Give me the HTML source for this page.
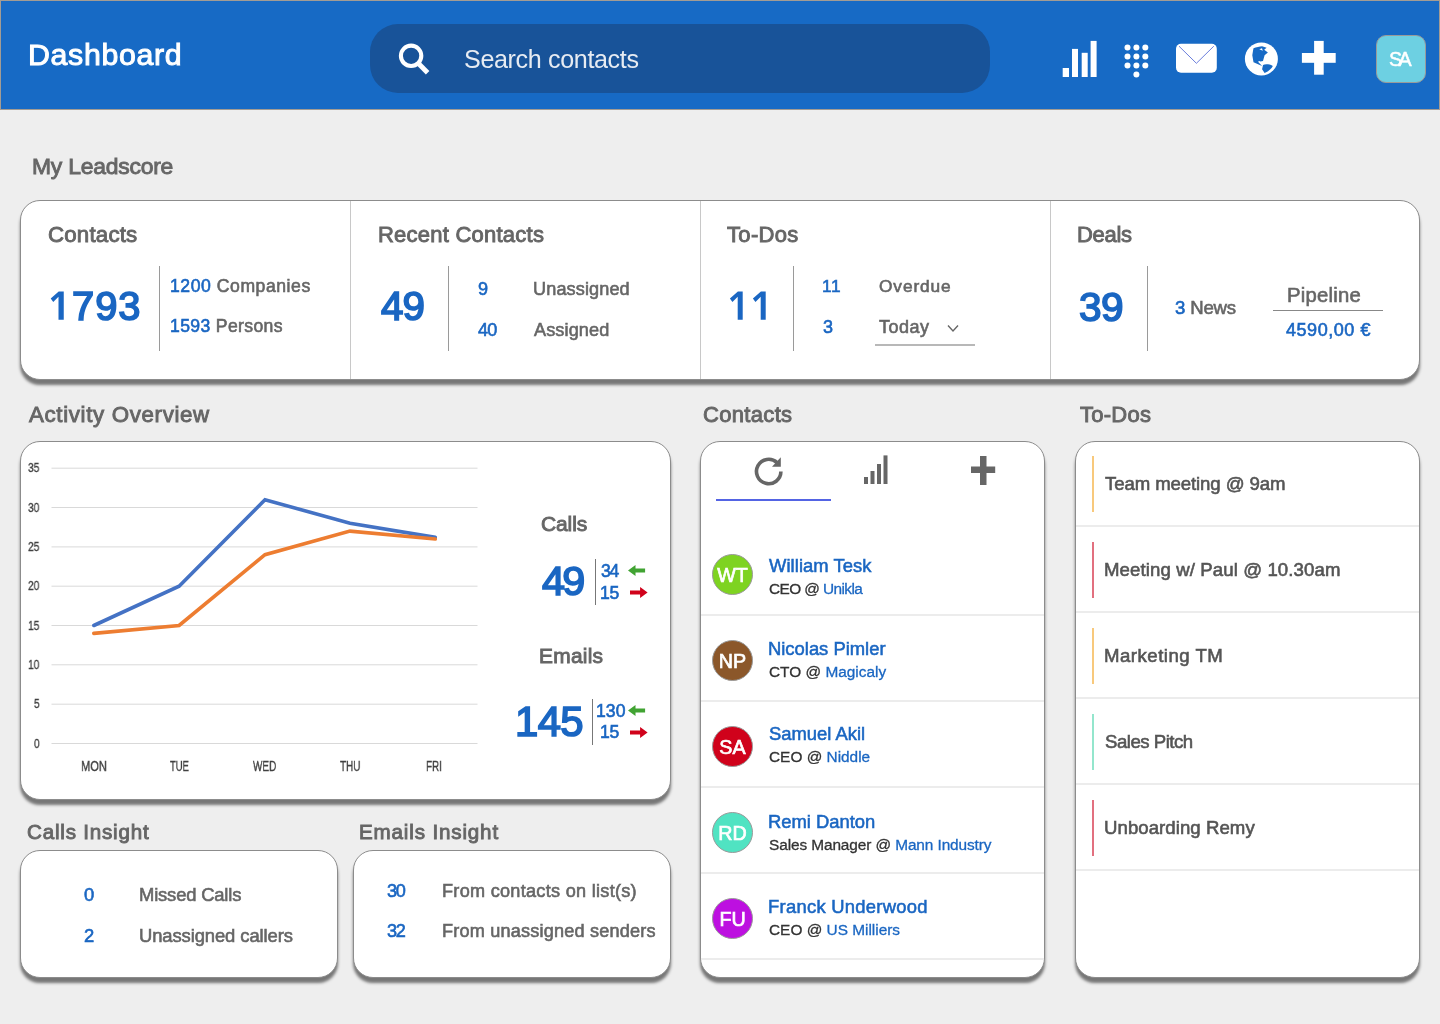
<!DOCTYPE html>
<html><head><meta charset="utf-8">
<style>
*{margin:0;padding:0;box-sizing:border-box}
html,body{width:1440px;height:1024px;overflow:hidden;background:#eeeeee;font-family:"Liberation Sans",sans-serif;position:relative}
.a{position:absolute;white-space:nowrap;line-height:1;will-change:transform}
.hdr{position:absolute;left:0;top:0;width:1440px;height:110px;background:#176ac5;border:1px solid #a39c94}
.search{position:absolute;left:370px;top:24px;width:620px;height:69px;border-radius:28px;background:#185399}
.card{position:absolute;background:#fff;border:1px solid #8c8c8c;border-radius:20px;box-shadow:0 5px 3px rgba(0,0,0,.5)}
.vd{position:absolute;width:1px;background:#9a9a9a}
.hd{position:absolute;height:2px;background:#ececec}
.av{position:absolute;width:41px;height:41px;border-radius:50%;border:1px solid #9a9a9a}
.bar{position:absolute;width:2px;height:56px}
</style></head><body>
<div class="hdr"></div>
<div class="a" style="left:27.70px;top:40.44px;font-size:30.3px;color:#fff;letter-spacing:0.667px;-webkit-text-stroke-width:1.0px">Dashboard</div>
<div class="search"></div>
<svg class="a" style="left:396px;top:40px" width="38" height="38" viewBox="0 0 38 38"><circle cx="15.1" cy="15.8" r="10.2" fill="none" stroke="#fff" stroke-width="4.1"/><line x1="21.5" y1="22.5" x2="31.6" y2="32.8" stroke="#fff" stroke-width="4.9"/></svg>
<div class="a" style="left:463.60px;top:46.55px;font-size:25.1px;color:#e6ebf2;letter-spacing:-0.356px">Search contacts</div>
<svg class="a" style="left:1060px;top:38px" width="40" height="42">
<rect x="2.7" y="30" width="6.3" height="9" fill="#fff"/>
<rect x="12" y="10.9" width="6" height="28.1" fill="#fff"/>
<rect x="21.7" y="14.8" width="6" height="24.2" fill="#fff"/>
<rect x="30.6" y="2.9" width="6" height="36.1" fill="#fff"/>
</svg>
<svg class="a" style="left:1115px;top:38px" width="40" height="42"><circle cx="12.5" cy="9.4" r="3" fill="#fff"/><circle cx="21.4" cy="9.4" r="3" fill="#fff"/><circle cx="30.3" cy="9.4" r="3" fill="#fff"/><circle cx="12.5" cy="18.6" r="3" fill="#fff"/><circle cx="21.4" cy="18.6" r="3" fill="#fff"/><circle cx="30.3" cy="18.6" r="3" fill="#fff"/><circle cx="12.5" cy="27.5" r="3" fill="#fff"/><circle cx="21.4" cy="27.5" r="3" fill="#fff"/><circle cx="30.3" cy="27.5" r="3" fill="#fff"/><circle cx="21.4" cy="36.4" r="3" fill="#fff"/></svg>
<svg class="a" style="left:1170px;top:38px" width="54" height="42">
<rect x="6" y="5.8" width="40.8" height="29" rx="5" fill="#fff"/>
<path d="M9 8.2 L26.4 25.3 L43.8 8.2" fill="none" stroke="#5a6fd8" stroke-width="0.9"/>
</svg>
<svg class="a" style="left:1240px;top:38px" width="44" height="42">
<circle cx="21.4" cy="20.9" r="16.5" fill="#fff"/>
<path d="M13.5 10.3 C16 9 20 8.5 22.1 8.2 L26.6 9.8 L24.2 11.7 L27.9 14.4 L24.6 17.2 L23 23 L20.5 23.4 L19.3 23 L18 23.8 L22.1 27.9 L13.5 24.2 L12.3 17.2 L13.1 12.3 Z" fill="#176ac5"/>
<path d="M19.3 11.3 L22 10.2 L22.8 12.7 Z" fill="#fff"/>
<path d="M23 27 C25 26 29 26 32.8 27.9 C32 30 29 33 24.6 34.9 L22.1 31.2 Z" fill="#176ac5"/>
</svg>
<svg class="a" style="left:1298px;top:38px" width="42" height="42">
<rect x="3.9" y="15" width="33.8" height="9.8" fill="#fff"/>
<rect x="16.1" y="2.9" width="9.6" height="33.8" fill="#fff"/>
</svg>
<div class="a" style="left:1376px;top:35px;width:50px;height:48px;border-radius:10px;background:#6dd0e2;border:1px solid #9a9a9a"></div>
<div class="a" style="left:1389.25px;top:50.12px;font-size:19.7px;color:#fff;letter-spacing:-3.531px;-webkit-text-stroke-width:0.5px">SA</div>
<div class="a" style="left:31.70px;top:155.41px;font-size:22.9px;color:#666666;letter-spacing:-0.222px;-webkit-text-stroke-width:0.9px">My Leadscore</div>
<div class="card" style="left:20px;top:200px;width:1400px;height:180px"></div>
<div class="vd" style="left:350px;top:201px;height:178px;background:#c8c8c8"></div>
<div class="vd" style="left:700px;top:201px;height:178px;background:#c8c8c8"></div>
<div class="vd" style="left:1050px;top:201px;height:178px;background:#c8c8c8"></div>
<div class="a" style="left:48.20px;top:223.82px;font-size:22.3px;color:#666666;letter-spacing:0.180px;-webkit-text-stroke-width:0.9px">Contacts</div>
<svg class="a" style="left:0;top:0;overflow:visible" width="1" height="1"><path d="M58.70 291.60 L63.75 291.60 L63.75 319.70 L58.50 319.70 L58.50 296.80 L53.25 301.90 L50.70 298.50 Z" fill="#1a66c2"/></svg>
<div class="a" style="left:71.65px;top:286.92px;font-size:39.9px;color:#1a66c2;letter-spacing:0.965px;-webkit-text-stroke-width:1.7px">793</div>
<div class="vd" style="left:159px;top:266px;height:85px"></div>
<div class="a" style="left:170.00px;top:277.60px;font-size:17.6px;color:#666666;letter-spacing:0.552px;-webkit-text-stroke-width:0.6px"><span style="color:#1a66c2">1200</span> Companies</div>
<div class="a" style="left:170.00px;top:318.20px;font-size:17.6px;color:#666666;letter-spacing:0.357px;-webkit-text-stroke-width:0.6px"><span style="color:#1a66c2">1593</span> Persons</div>
<div class="a" style="left:377.65px;top:223.97px;font-size:22.0px;color:#666666;letter-spacing:0.233px;-webkit-text-stroke-width:0.9px">Recent Contacts</div>
<div class="a" style="left:380.95px;top:286.68px;font-size:40.3px;color:#1a66c2;letter-spacing:-0.811px;-webkit-text-stroke-width:1.7px">49</div>
<div class="vd" style="left:448px;top:266px;height:85px"></div>
<div class="a" style="left:477.80px;top:280.17px;font-size:18.1px;color:#1a66c2;-webkit-text-stroke-width:0.6px">9</div>
<div class="a" style="left:533.30px;top:280.17px;font-size:18.1px;color:#666666;letter-spacing:0.123px;-webkit-text-stroke-width:0.6px">Unassigned</div>
<div class="a" style="left:477.80px;top:321.07px;font-size:18.1px;color:#1a66c2;letter-spacing:-0.763px;-webkit-text-stroke-width:0.6px">40</div>
<div class="a" style="left:534.30px;top:321.07px;font-size:18.1px;color:#666666;letter-spacing:0.118px;-webkit-text-stroke-width:0.6px">Assigned</div>
<div class="a" style="left:727.45px;top:223.97px;font-size:22.0px;color:#666666;letter-spacing:0.323px;-webkit-text-stroke-width:0.9px">To-Dos</div>
<svg class="a" style="left:0;top:0;overflow:visible" width="1" height="1"><path d="M737.90 291.60 L742.70 291.60 L742.70 319.80 L737.70 319.80 L737.70 296.80 L732.45 301.90 L729.90 298.50 Z" fill="#1a66c2"/></svg>
<svg class="a" style="left:0;top:0;overflow:visible" width="1" height="1"><path d="M760.90 291.60 L765.70 291.60 L765.70 319.80 L760.70 319.80 L760.70 296.80 L755.45 301.90 L752.90 298.50 Z" fill="#1a66c2"/></svg>
<div class="vd" style="left:793px;top:266px;height:85px"></div>
<div class="a" style="left:822.20px;top:277.95px;font-size:17.3px;color:#1a66c2;letter-spacing:0.572px;-webkit-text-stroke-width:0.6px">11</div>
<div class="a" style="left:879.30px;top:277.95px;font-size:17.3px;color:#666666;letter-spacing:0.905px;-webkit-text-stroke-width:0.6px">Overdue</div>
<div class="a" style="left:823.20px;top:318.16px;font-size:18.0px;color:#1a66c2;-webkit-text-stroke-width:0.6px">3</div>
<div class="a" style="left:878.60px;top:318.16px;font-size:18.0px;color:#666666;letter-spacing:0.492px;-webkit-text-stroke-width:0.6px">Today</div>
<svg class="a" style="left:945px;top:322px" width="16" height="12"><path d="M3 3.6 L8 9 L13 3.6" fill="none" stroke="#666" stroke-width="1.4"/></svg>
<div class="a" style="left:875.4px;top:343.5px;width:100px;height:1.6px;background:#b8b8b8"></div>
<div class="a" style="left:1077.45px;top:224.37px;font-size:22.0px;color:#666666;letter-spacing:-0.287px;-webkit-text-stroke-width:0.9px">Deals</div>
<div class="a" style="left:1078.55px;top:286.52px;font-size:40.6px;color:#1a66c2;letter-spacing:-0.568px;-webkit-text-stroke-width:1.7px">39</div>
<div class="vd" style="left:1147px;top:266px;height:85px"></div>
<div class="a" style="left:1175.10px;top:299.25px;font-size:18.6px;color:#666666;letter-spacing:-0.181px;-webkit-text-stroke-width:0.6px"><span style="color:#1a66c2">3</span> News</div>
<div class="a" style="left:1287.00px;top:284.81px;font-size:20.3px;color:#666666;letter-spacing:0.245px;-webkit-text-stroke-width:0.6px">Pipeline</div>
<div class="a" style="left:1273px;top:310px;width:110px;height:1px;background:#888"></div>
<div class="a" style="left:1285.60px;top:320.56px;font-size:18.0px;color:#1a66c2;letter-spacing:0.542px;-webkit-text-stroke-width:0.6px">4590,00 €</div>
<div class="a" style="left:28.55px;top:404.22px;font-size:22.3px;color:#666666;letter-spacing:0.654px;-webkit-text-stroke-width:0.9px">Activity Overview</div>
<div class="card" style="left:20px;top:441px;width:651px;height:359px"></div>
<svg class="a" style="left:0;top:0" width="700" height="800"><line x1="51.5" y1="743.5" x2="477.5" y2="743.5" stroke="#d9d9d9" stroke-width="1"/><line x1="51.5" y1="704.2" x2="477.5" y2="704.2" stroke="#d9d9d9" stroke-width="1"/><line x1="51.5" y1="664.8" x2="477.5" y2="664.8" stroke="#d9d9d9" stroke-width="1"/><line x1="51.5" y1="625.5" x2="477.5" y2="625.5" stroke="#d9d9d9" stroke-width="1"/><line x1="51.5" y1="586.2" x2="477.5" y2="586.2" stroke="#d9d9d9" stroke-width="1"/><line x1="51.5" y1="546.9" x2="477.5" y2="546.9" stroke="#d9d9d9" stroke-width="1"/><line x1="51.5" y1="507.5" x2="477.5" y2="507.5" stroke="#d9d9d9" stroke-width="1"/><line x1="51.5" y1="468.2" x2="477.5" y2="468.2" stroke="#d9d9d9" stroke-width="1"/></svg>
<div class="a" style="left:33.84px;top:737.63px;font-size:12.6px;color:#404040;-webkit-text-stroke-width:0.35px;transform:scaleX(0.7891);transform-origin:0 0">0</div>
<div class="a" style="left:33.84px;top:698.30px;font-size:12.6px;color:#404040;-webkit-text-stroke-width:0.35px;transform:scaleX(0.7891);transform-origin:0 0">5</div>
<div class="a" style="left:28.04px;top:658.97px;font-size:12.6px;color:#404040;-webkit-text-stroke-width:0.35px;transform:scaleX(0.8081);transform-origin:0 0">10</div>
<div class="a" style="left:28.04px;top:619.64px;font-size:12.6px;color:#404040;-webkit-text-stroke-width:0.35px;transform:scaleX(0.8081);transform-origin:0 0">15</div>
<div class="a" style="left:28.04px;top:580.31px;font-size:12.6px;color:#404040;-webkit-text-stroke-width:0.35px;transform:scaleX(0.8081);transform-origin:0 0">20</div>
<div class="a" style="left:28.04px;top:540.98px;font-size:12.6px;color:#404040;-webkit-text-stroke-width:0.35px;transform:scaleX(0.8081);transform-origin:0 0">25</div>
<div class="a" style="left:28.04px;top:501.65px;font-size:12.6px;color:#404040;-webkit-text-stroke-width:0.35px;transform:scaleX(0.8081);transform-origin:0 0">30</div>
<div class="a" style="left:28.04px;top:462.32px;font-size:12.6px;color:#404040;-webkit-text-stroke-width:0.35px;transform:scaleX(0.8081);transform-origin:0 0">35</div>
<div class="a" style="left:80.90px;top:757.53px;font-size:15.2px;color:#404040;-webkit-text-stroke-width:0.35px;transform:scaleX(0.7275);transform-origin:0 0">MON</div>
<div class="a" style="left:169.51px;top:757.53px;font-size:15.2px;color:#404040;-webkit-text-stroke-width:0.35px;transform:scaleX(0.6210);transform-origin:0 0">TUE</div>
<div class="a" style="left:252.61px;top:757.53px;font-size:15.2px;color:#404040;-webkit-text-stroke-width:0.35px;transform:scaleX(0.6562);transform-origin:0 0">WED</div>
<div class="a" style="left:339.51px;top:757.53px;font-size:15.2px;color:#404040;-webkit-text-stroke-width:0.35px;transform:scaleX(0.6537);transform-origin:0 0">THU</div>
<div class="a" style="left:426.36px;top:757.53px;font-size:15.2px;color:#404040;-webkit-text-stroke-width:0.35px;transform:scaleX(0.6506);transform-origin:0 0">FRI</div>
<svg class="a" style="left:0;top:0" width="700" height="800"><polyline points="93.8,625.5 179.1,586.2 265,499.7 350,523.3 435.3,537.4" fill="none" stroke="#4472c4" stroke-width="3.6" stroke-linejoin="miter" stroke-linecap="round"/><polyline points="93.8,633.4 179.1,625.5 265,554.7 350,531.1 435.3,539.0" fill="none" stroke="#ed7d31" stroke-width="3.6" stroke-linejoin="miter" stroke-linecap="round"/></svg>
<div class="a" style="left:540.65px;top:512.82px;font-size:21.0px;color:#666666;letter-spacing:-0.119px;-webkit-text-stroke-width:0.9px">Calls</div>
<div class="a" style="left:542.05px;top:561.13px;font-size:41.3px;color:#1a66c2;letter-spacing:-2.767px;-webkit-text-stroke-width:1.7px">49</div>
<div class="vd" style="left:595px;top:559px;height:46px;background:#777"></div>
<div class="a" style="left:600.60px;top:562.90px;font-size:17.6px;color:#1a66c2;letter-spacing:-1.385px;-webkit-text-stroke-width:0.6px">34</div>
<div class="a" style="left:599.60px;top:584.80px;font-size:17.6px;color:#1a66c2;letter-spacing:-0.385px;-webkit-text-stroke-width:0.6px">15</div>
<div class="a" style="left:538.65px;top:646.00px;font-size:20.9px;color:#666666;letter-spacing:0.273px;-webkit-text-stroke-width:0.9px">Emails</div>
<div class="a" style="left:514.55px;top:701.02px;font-size:41.9px;color:#1a66c2;letter-spacing:-0.648px;-webkit-text-stroke-width:1.7px">145</div>
<div class="vd" style="left:592px;top:699px;height:46px;background:#777"></div>
<div class="a" style="left:595.90px;top:702.80px;font-size:17.6px;color:#1a66c2;letter-spacing:0.065px;-webkit-text-stroke-width:0.6px">130</div>
<div class="a" style="left:599.60px;top:724.10px;font-size:17.6px;color:#1a66c2;letter-spacing:-0.385px;-webkit-text-stroke-width:0.6px">15</div>
<svg class="a" style="left:627.9px;top:565.4px" width="18.100000000000023" height="11"><path d="M0 5.5 L7.5 0 L7.5 3.6 L17.100000000000023 3.6 L17.100000000000023 7.4 L7.5 7.4 L7.5 11 Z" fill="#41a332"/></svg>
<svg class="a" style="left:629.6px;top:587.4px" width="18.600000000000023" height="11"><path d="M17.600000000000023 5.5 L10.100000000000023 0 L10.100000000000023 3.6 L0 3.6 L0 7.4 L10.100000000000023 7.4 L10.100000000000023 11 Z" fill="#d0021b"/></svg>
<svg class="a" style="left:627.9px;top:705.2px" width="18.100000000000023" height="11"><path d="M0 5.5 L7.5 0 L7.5 3.6 L17.100000000000023 3.6 L17.100000000000023 7.4 L7.5 7.4 L7.5 11 Z" fill="#41a332"/></svg>
<svg class="a" style="left:629.6px;top:726.7px" width="18.600000000000023" height="11"><path d="M17.600000000000023 5.5 L10.100000000000023 0 L10.100000000000023 3.6 L0 3.6 L0 7.4 L10.100000000000023 7.4 L10.100000000000023 11 Z" fill="#d0021b"/></svg>
<div class="a" style="left:26.55px;top:821.66px;font-size:20.6px;color:#666666;letter-spacing:0.788px;-webkit-text-stroke-width:0.9px">Calls Insight</div>
<div class="card" style="left:20px;top:850px;width:318px;height:128px"></div>
<div class="a" style="left:84.10px;top:886.02px;font-size:18.4px;color:#1a66c2;-webkit-text-stroke-width:0.6px">0</div>
<div class="a" style="left:139.30px;top:886.02px;font-size:18.4px;color:#666666;letter-spacing:-0.167px;-webkit-text-stroke-width:0.6px">Missed Calls</div>
<div class="a" style="left:84.10px;top:926.92px;font-size:18.4px;color:#1a66c2;-webkit-text-stroke-width:0.6px">2</div>
<div class="a" style="left:139.30px;top:926.92px;font-size:18.4px;color:#666666;letter-spacing:-0.087px;-webkit-text-stroke-width:0.6px">Unassigned callers</div>
<div class="a" style="left:358.65px;top:821.96px;font-size:20.6px;color:#666666;letter-spacing:0.841px;-webkit-text-stroke-width:0.9px">Emails Insight</div>
<div class="card" style="left:353px;top:850px;width:318px;height:128px"></div>
<div class="a" style="left:387.00px;top:881.87px;font-size:18.1px;color:#1a66c2;letter-spacing:-1.263px;-webkit-text-stroke-width:0.6px">30</div>
<div class="a" style="left:442.10px;top:881.87px;font-size:18.1px;color:#666666;letter-spacing:0.287px;-webkit-text-stroke-width:0.6px">From contacts on list(s)</div>
<div class="a" style="left:387.00px;top:921.97px;font-size:18.1px;color:#1a66c2;letter-spacing:-1.263px;-webkit-text-stroke-width:0.6px">32</div>
<div class="a" style="left:442.10px;top:921.97px;font-size:18.1px;color:#666666;letter-spacing:0.198px;-webkit-text-stroke-width:0.6px">From unassigned senders</div>
<div class="a" style="left:702.95px;top:404.37px;font-size:22.0px;color:#666666;letter-spacing:0.326px;-webkit-text-stroke-width:0.9px">Contacts</div>
<div class="card" style="left:700px;top:441px;width:345px;height:537px"></div>
<svg class="a" style="left:750px;top:452px" width="40" height="40" viewBox="0 0 40 40">
<path d="M30.9 19.6 A12.2 12.2 0 1 1 27 10.6" fill="none" stroke="#666" stroke-width="3.6"/>
<path d="M30.8 5.3 L30.8 14.8 L22 14.8 Z" fill="#666"/>
</svg>
<svg class="a" style="left:860px;top:452px" width="32" height="36">
<rect x="4" y="25" width="4" height="7" fill="#666"/>
<rect x="10.5" y="19" width="4" height="13" fill="#666"/>
<rect x="17" y="12" width="4" height="20" fill="#666"/>
<rect x="23.5" y="3.4" width="4" height="28.6" fill="#666"/>
</svg>
<svg class="a" style="left:968px;top:452px" width="32" height="36">
<rect x="3" y="14.5" width="24.2" height="6.5" fill="#666"/>
<rect x="12" y="4" width="6.5" height="29" fill="#666"/>
</svg>
<div class="a" style="left:716px;top:498.5px;width:115px;height:2px;background:#5464e4"></div>
<div class="av" style="left:712px;top:553.7px;background:#7ed321"></div>
<div class="a" style="left:712px;top:566.02px;width:41px;text-align:center;font-size:19.7px;color:#fff;-webkit-text-stroke-width:0.7px">WT</div>
<div class="a" style="left:768.77px;top:557.12px;font-size:18.4px;color:#1a66c2;letter-spacing:0.066px;-webkit-text-stroke-width:0.55px">William Tesk</div>
<div class="a" style="left:768.65px;top:581.46px;font-size:15.4px;color:#333;letter-spacing:-0.585px;-webkit-text-stroke-width:0.3px">CEO @ <span style="color:#1a66c2">Unikla</span></div>
<div class="hd" style="left:701px;top:613.6px;width:343px"></div>
<div class="av" style="left:712px;top:639.8px;background:#8b572a"></div>
<div class="a" style="left:712px;top:652.12px;width:41px;text-align:center;font-size:19.7px;color:#fff;-webkit-text-stroke-width:0.7px">NP</div>
<div class="a" style="left:767.77px;top:640.02px;font-size:18.4px;color:#1a66c2;-webkit-text-stroke-width:0.55px">Nicolas Pimler</div>
<div class="a" style="left:768.65px;top:664.36px;font-size:15.4px;color:#333;-webkit-text-stroke-width:0.3px">CTO @ <span style="color:#1a66c2">Magicaly</span></div>
<div class="hd" style="left:701px;top:699.7px;width:343px"></div>
<div class="av" style="left:712px;top:725.9px;background:#d0021b"></div>
<div class="a" style="left:712px;top:738.22px;width:41px;text-align:center;font-size:19.7px;color:#fff;-webkit-text-stroke-width:0.7px">SA</div>
<div class="a" style="left:768.77px;top:724.92px;font-size:18.4px;color:#1a66c2;-webkit-text-stroke-width:0.55px">Samuel Akil</div>
<div class="a" style="left:768.65px;top:749.26px;font-size:15.4px;color:#333;-webkit-text-stroke-width:0.3px">CEO @ <span style="color:#1a66c2">Niddle</span></div>
<div class="hd" style="left:701px;top:785.8px;width:343px"></div>
<div class="av" style="left:712px;top:812.0px;background:#50e3c2"></div>
<div class="a" style="left:712px;top:824.32px;width:41px;text-align:center;font-size:19.7px;color:#fff;-webkit-text-stroke-width:0.7px">RD</div>
<div class="a" style="left:767.77px;top:812.72px;font-size:18.4px;color:#1a66c2;-webkit-text-stroke-width:0.55px">Remi Danton</div>
<div class="a" style="left:768.65px;top:837.06px;font-size:15.4px;color:#333;letter-spacing:-0.097px;-webkit-text-stroke-width:0.3px">Sales Manager @ <span style="color:#1a66c2">Mann Industry</span></div>
<div class="hd" style="left:701px;top:871.9px;width:343px"></div>
<div class="av" style="left:712px;top:898.1px;background:#bd10e0"></div>
<div class="a" style="left:712px;top:910.42px;width:41px;text-align:center;font-size:19.7px;color:#fff;-webkit-text-stroke-width:0.7px">FU</div>
<div class="a" style="left:767.77px;top:898.12px;font-size:18.4px;color:#1a66c2;letter-spacing:0.281px;-webkit-text-stroke-width:0.55px">Franck Underwood</div>
<div class="a" style="left:768.65px;top:922.46px;font-size:15.4px;color:#333;-webkit-text-stroke-width:0.3px">CEO @ <span style="color:#1a66c2">US Milliers</span></div>
<div class="hd" style="left:701px;top:958.0px;width:343px"></div>
<div class="a" style="left:1079.75px;top:404.37px;font-size:22.0px;color:#666666;letter-spacing:0.263px;-webkit-text-stroke-width:0.9px">To-Dos</div>
<div class="card" style="left:1075px;top:441px;width:345px;height:537px"></div>
<div class="bar" style="left:1092px;top:456px;background:#f8c97c"></div>
<div class="a" style="left:1104.80px;top:475.15px;font-size:18.6px;color:#555;letter-spacing:-0.098px;-webkit-text-stroke-width:0.6px">Team meeting @ 9am</div>
<div class="hd" style="left:1076px;top:525px;width:343px"></div>
<div class="bar" style="left:1092px;top:542px;background:#e2707f"></div>
<div class="a" style="left:1103.80px;top:561.15px;font-size:18.6px;color:#555;letter-spacing:0.106px;-webkit-text-stroke-width:0.6px">Meeting w/ Paul @ 10.30am</div>
<div class="hd" style="left:1076px;top:611px;width:343px"></div>
<div class="bar" style="left:1092px;top:628px;background:#f8c97c"></div>
<div class="a" style="left:1103.80px;top:647.15px;font-size:18.6px;color:#555;letter-spacing:0.503px;-webkit-text-stroke-width:0.6px">Marketing TM</div>
<div class="hd" style="left:1076px;top:697px;width:343px"></div>
<div class="bar" style="left:1092px;top:714px;background:#94e6cd"></div>
<div class="a" style="left:1104.80px;top:733.15px;font-size:18.6px;color:#555;letter-spacing:-0.487px;-webkit-text-stroke-width:0.6px">Sales Pitch</div>
<div class="hd" style="left:1076px;top:783px;width:343px"></div>
<div class="bar" style="left:1092px;top:800px;background:#e2707f"></div>
<div class="a" style="left:1103.80px;top:819.15px;font-size:18.6px;color:#555;letter-spacing:0.060px;-webkit-text-stroke-width:0.6px">Unboarding Remy</div>
<div class="hd" style="left:1076px;top:869px;width:343px"></div>
</body></html>
